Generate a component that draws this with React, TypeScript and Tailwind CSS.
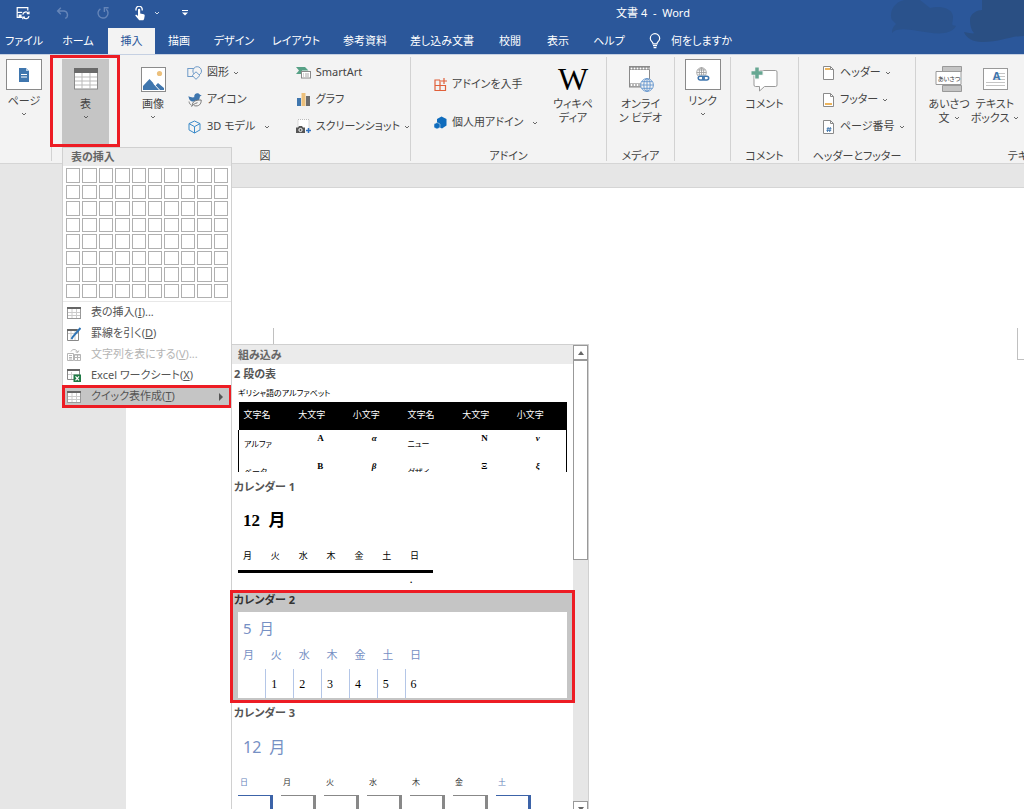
import type { ReactNode } from "react";
import { clsx } from "clsx";

interface Tab {
  label: string;
  width: string;
  active?: boolean;
}

const tabs: Tab[] = [
  { label: "ファイル", width: "w-[48px]" },
  { label: "ホーム", width: "w-[60px]" },
  { label: "挿入", width: "w-[47px]", active: true },
  { label: "描画", width: "w-[48px]" },
  { label: "デザイン", width: "w-[62px]" },
  { label: "レイアウト", width: "w-[62px]" },
  { label: "参考資料", width: "w-[76px]" },
  { label: "差し込み文書", width: "w-[78px]" },
  { label: "校閲", width: "w-[58px]" },
  { label: "表示", width: "w-[38px]" },
  { label: "ヘルプ", width: "w-[64px]" },
];

const days = ["月", "火", "水", "木", "金", "土", "日"];
const sundayFirst = ["日", "月", "火", "水", "木", "金", "土"];

const greekRows = [
  ["アルファ", "Α", "α", "ニュー", "Ν", "ν"],
  ["ベータ", "Β", "β", "グザイ", "Ξ", "ξ"],
];

function Chevron({ className }: { className?: string }) {
  return (
    <svg viewBox="0 0 6 4" className={clsx("h-1 w-1.5 shrink-0", className)} fill="none" stroke="currentColor" strokeWidth=".8">
      <path d="M1 1l2 2 2-2" />
    </svg>
  );
}

/* ---------- icons ---------- */

function SaveSyncIcon() {
  return (
    <svg viewBox="0 0 14 14" className="size-3.5" fill="none" stroke="white" strokeWidth="1.2">
      <path d="M6 11.4H1.2V1.6h10.6v3" />
      <path d="M1.2 6.4h5" />
      <path d="M2.6 8.5h3v3h-3z" fill="white" stroke="none" />
      <path d="M6.8 8.6a3 3 0 0 1 5.4-1.4M13 5.4v2.2h-2.2M13 10.2a3 3 0 0 1-5.4 1.2M6.8 13.2V11H9" />
    </svg>
  );
}

function UndoIcon() {
  return (
    <svg viewBox="0 0 14 14" className="size-3.5" fill="none" stroke="#6585b8" strokeWidth="1.4">
      <path d="M4.8 1.8L1.6 5l3.2 3.2M1.8 5h6.4a3.9 3.9 0 0 1 1 7.4" />
    </svg>
  );
}

function RedoIcon() {
  return (
    <svg viewBox="0 0 14 14" className="size-3.5" fill="none" stroke="#6585b8" strokeWidth="1.4">
      <path d="M4.4 2.8A5 5 0 1 0 10.2 3.200M8.400 6V1.800h4.200" />
    </svg>
  );
}

function TouchIcon() {
  return (
    <svg viewBox="0 0 12 15" className="h-[15px] w-3" fill="white">
      <path d="M2.2 4.4a3.1 3.1 0 1 1 5.8 0" fill="none" stroke="white" strokeWidth="1.3" />
      <path d="M4 3.8a1.1 1.1 0 0 1 2.2 0v3.700l3.600.8c.7.2 1 .7.9 1.400l-.6 3.400-.8 1.200H5.200L1.400 9.800c-.3-.7.7-1.400 1.500-.8L4 10z" />
    </svg>
  );
}

function BulbIcon() {
  return (
    <svg viewBox="0 0 12 16" className="h-4 w-3" fill="none" stroke="white" strokeWidth="1.2">
      <path d="M4 10.8C4 9 1.3 8.2 1.3 5.4a4.7 4.7 0 0 1 9.4 0C10.7 8.2 8 9 8 10.8zM4 12.6h4M4.6 14.6h2.8" />
    </svg>
  );
}

function PageIcon() {
  return (
    <svg viewBox="0 0 12 14" className="h-3.5 w-3">
      <path d="M1 0h7l3 3v11H1z" fill="#3f76ae" />
      <path d="M8 0v3h3z" fill="#b7cfe6" />
      <path d="M3 6.5h6M3 9h6" stroke="white" />
    </svg>
  );
}

function TableIcon() {
  return (
    <svg viewBox="0 0 24 22" className="h-[22px] w-6">
      <rect x=".5" y=".5" width="23" height="20.5" fill="white" stroke="#8a8a8a" />
      <rect width="24" height="5" fill="#6a6a6a" />
      <path d="M8 5v16M16 5v16M1 9h22M1 13h22M1 17h22" stroke="#bbb" />
    </svg>
  );
}

function PictureIcon() {
  return (
    <svg viewBox="0 0 25 25" className="size-[25px]">
      <rect x=".5" y=".5" width="24" height="24" fill="white" stroke="#8b8b8b" />
      <circle cx="18.5" cy="6.5" r="2.6" fill="#ecc07c" />
      <path d="M2 23v-4l6.5-7 6 6.5 2.5-2.5 6 5v2z" fill="#3f76ae" />
      <path d="M12.500 16.500l6 6.500" stroke="white" />
    </svg>
  );
}

function ShapesIcon() {
  return (
    <svg viewBox="0 0 16 14" className="h-3.5 w-4" fill="#f3f3f3" stroke="#6f9bc8">
      <rect x=".8" y="2.5" width="9" height="8" />
      <circle cx="10.2" cy="5" r="4.3" />
      <path d="M9 5.8l3.9 3.7L9 13.3 5.2 9.5z" />
    </svg>
  );
}

function BirdIcon() {
  return (
    <svg viewBox="0 0 14 14" className="size-3.5">
      <path d="M.5 3c1.800 1.300 3.800 1.700 5.700 1.300C6 1.800 7.500.3 9.300.3c1.300 0 2.200.6 2.600 1.500l1.800.8-1.800.9c-.1 2.300-1 4-2.900 5H4C1.800 7.800.5 5.500.5 3z" fill="#3f76ae" />
      <path d="M1 8.500c.3 2 1.200 3.200 2.800 4" fill="none" stroke="#888" />
      <path d="M4.500 12.500c-.5-3.500 2.500-5.700 8.700-5.500.2 4-2.200 6.800-7 5.700" fill="#f3f3f3" stroke="#777" />
      <path d="M3.500 13.700c1.500-2 3.500-3.400 6-4" fill="none" stroke="#777" />
    </svg>
  );
}

function CubeIcon() {
  return (
    <svg viewBox="0 0 14 14" className="size-3.5" fill="none" stroke="#3b8bc9">
      <path d="M6.500 1l5.500 2.600v6.300L6.500 13 1 9.900V3.600zM1 3.600l5.500 3 5.500-3M6.500 6.600V13" />
    </svg>
  );
}

function SmartArtIcon() {
  return (
    <svg viewBox="0 0 15 13" className="h-[13px] w-[15px]">
      <path d="M0 1h9l3.500 3.500H6V8H0l3-3.500z" fill="#57a186" />
      <rect x="5.500" y="5.500" width="9" height="6.500" fill="white" stroke="#8a8a8a" />
      <path d="M7 8h1M9 8h4M7 10h1M9 10h4" stroke="#aaa" />
    </svg>
  );
}

function ChartIcon() {
  return (
    <svg viewBox="0 0 13 13" className="size-[13px]">
      <path d="M0 5h4v8H0z" fill="#3f76ae" />
      <path d="M4.500 0h4v13h-4z" fill="#ecc07c" />
      <path d="M9 3h4v10H9z" fill="#6d6d6d" />
    </svg>
  );
}

function ScreenshotIcon() {
  return (
    <svg viewBox="0 0 15 15" className="size-[15px]">
      <rect x="2" y=".5" width="11" height="11" fill="white" stroke="#bbb" strokeDasharray="1 1" />
      <path d="M0 8.500h2l1-1.500h3l1 1.500h2V14H0z" fill="#555" />
      <circle cx="4.500" cy="11" r="1.600" fill="none" stroke="white" />
      <path d="M12.500 9v5M10 11.500h5" stroke="#2e6fbf" strokeWidth="1.500" />
    </svg>
  );
}

function StoreIcon() {
  return (
    <svg viewBox="0 0 15 15" className="size-[15px]" fill="none" stroke="#e0603a" strokeWidth="1.200">
      <path d="M7 3H2v10.500h10.500V8.500H2M7 3v10.500M11 1v6M8 4h6" />
    </svg>
  );
}

function MyAddinIcon() {
  return (
    <svg viewBox="0 0 13 13" className="size-[13px]" fill="#0f6cbd">
      <path d="M7.500.5L12.500 3v6.500L8 12.500 3 10V3z" />
      <path d="M0 8l3-1.500L6 8v3.500L3 13l-3-1.500z" stroke="#f3f3f3" strokeWidth=".5" />
    </svg>
  );
}

function VideoIcon() {
  return (
    <svg viewBox="0 0 26 26" className="size-[26px]" fill="none">
      <rect x="1.500" y=".5" width="20" height="20.500" fill="white" stroke="#8a8a8a" />
      <path d="M2 2.500h19M2 19h19" stroke="#777" strokeWidth="3" />
      <path d="M2.500 2.500h19M2.500 19h19" stroke="white" strokeWidth="2" strokeDasharray="2 1" />
      <circle cx="19" cy="19" r="6.400" fill="#f3f3f3" stroke="#6c9bd0" />
      <path d="M19 12.600v12.800M12.600 19h12.800M13.700 15.700h10.600M13.700 22.300h10.600" stroke="#6c9bd0" />
      <ellipse cx="19" cy="19" rx="3.200" ry="6.400" stroke="#6c9bd0" />
    </svg>
  );
}

function LinkIcon() {
  return (
    <svg viewBox="0 0 15 15" className="size-[15px]" fill="none">
      <g stroke="#999" strokeWidth=".8">
        <circle cx="6.500" cy="5.500" r="4.800" />
        <ellipse cx="6.500" cy="5.500" rx="2.200" ry="4.800" />
        <path d="M1.700 5.500h9.600M6.500.7v9.600M2.500 3h8M2.500 8h8" />
      </g>
      <path d="M3 8.500h11v5H3z" fill="white" />
      <g stroke="#3f76ae" strokeWidth="1.500">
        <rect x="3.200" y="9.200" width="6" height="3.800" rx="1.900" />
        <rect x="7.700" y="9.200" width="6" height="3.800" rx="1.900" />
      </g>
    </svg>
  );
}

function CommentIcon() {
  return (
    <svg viewBox="0 0 27 25" className="h-[25px] w-[27px]">
      <path d="M4.500 3.500h20a1.500 1.500 0 0 1 1.500 1.500v13a1.500 1.500 0 0 1-1.500 1.500h-11L8.500 24v-4.500h-4A1.500 1.500 0 0 1 3 18V5a1.500 1.500 0 0 1 1.500-1.500z" fill="white" stroke="#999" />
      <path d="M6 0v12.500M0 6h12.500" stroke="#f3f3f3" strokeWidth="5" />
      <path d="M6 .5v11M.5 6h11" stroke="#67a792" strokeWidth="3.500" />
    </svg>
  );
}

function SheetIcon({ kind }: { kind: "header" | "footer" | "number" }) {
  return (
    <svg viewBox="0 0 11 14" className="h-3.5 w-[11px]">
      <path d="M.5.500h7l3 3v10H.5z" fill="white" stroke="#8a8a8a" />
      <path d="M7.500.500v3h3" fill="none" stroke="#8a8a8a" />
      {kind === "header" && <path d="M2 3h5" stroke="#ecb45c" strokeWidth="2" />}
      {kind === "footer" && <path d="M2 11h7" stroke="#ecb45c" strokeWidth="2" />}
      {kind === "number" && <path d="M5.200 7l-.8 5M7.400 7l-.8 5M3.700 8.700h4.800M3.400 10.400h4.800" stroke="#3f76ae" strokeWidth=".9" />}
    </svg>
  );
}

function GreetingIcon() {
  return (
    <span className="relative flex h-[26px] w-[28px] items-center justify-center">
      <svg viewBox="0 0 28 26" className="absolute inset-0">
        <path d="M7.500.5h19v5h-19zM7.500 19.500h19v6h-19z" fill="#c4c4c4" stroke="#999" />
        <path d="M1 5.500h25v13H1z" fill="white" stroke="#999" />
      </svg>
      <span className="relative text-[6px] leading-none text-[#333]">あいさつ</span>
    </span>
  );
}

function TextBoxIcon() {
  return (
    <span className="relative block h-[22px] w-[25px]">
      <svg viewBox="0 0 25 22" className="absolute inset-0">
        <rect x=".5" y=".5" width="24" height="21" fill="white" stroke="#999" />
        <path d="M12 5.500h10M12 8.500h10M12 11.500h10M3 14.500h19M3 17.500h19" stroke="#c5c5c5" />
      </svg>
      <span className="relative block pt-0.5 pl-[3px] text-[11px] leading-3 font-bold text-[#3f76ae]">A</span>
    </span>
  );
}

function MenuTableIcon() {
  return (
    <svg viewBox="0 0 14 12" className="h-3 w-3.5">
      <rect x=".5" y=".5" width="13" height="11" fill="white" stroke="#999" />
      <path d="M0 1h14" stroke="#666" strokeWidth="2" />
      <path d="M5 2v9M9.500 2v9M1 5.500h12M1 8.500h12" stroke="#ccc" />
    </svg>
  );
}

function DrawTableIcon() {
  return (
    <svg viewBox="0 0 14 14" className="size-3.5">
      <path d="M.5 2.500h11v11H.5z" fill="white" stroke="#888" />
      <path d="M0 3h10" stroke="#666" strokeWidth="2" />
      <path d="M1 6.500h10M4 4v9M8 4v9" stroke="#ccc" />
      <path d="M13.500 1L6 9.500 4.500 12" stroke="#2f74b5" strokeWidth="2" fill="none" />
    </svg>
  );
}

function ConvertIcon() {
  return (
    <svg viewBox="0 0 14 13" className="h-[13px] w-3.5" fill="none" stroke="#b5b5b5">
      <path d="M.5 5.500h6v7h-6zM2 7.500h3M2 9.500h3M2 11h3" />
      <path d="M7.500 6.500h6v6h-6zM7.500 9.500h6M10.500 7v5M7.500 7h6" />
      <path d="M4 3.500c1-2.500 5-3 6.500.5M11.800 2.500l-1 2-2.200-.7" />
    </svg>
  );
}

function ExcelIcon() {
  return (
    <svg viewBox="0 0 14 13" className="h-[13px] w-3.5">
      <path d="M.5.500h12v10H.5z" fill="white" stroke="#888" />
      <path d="M0 1h13" stroke="#666" strokeWidth="2" />
      <path d="M1 5.500h11M4.500 3v7" stroke="#ccc" />
      <path d="M6.500 5.500H14V13H6.500z" fill="#1f7a45" />
      <path d="M8.500 7.300l3.500 4M12 7.300l-3.500 4" stroke="white" strokeWidth="1.200" />
    </svg>
  );
}

/* ---------- ribbon pieces ---------- */

function Group({ label, className, children }: { label?: string; className?: string; children: ReactNode }) {
  return (
    <section className={clsx("relative flex shrink-0 flex-col justify-between pt-1", className)}>
      <div className="flex">{children}</div>
      {label && <div className="h-[14px] text-center leading-[14px] whitespace-nowrap">{label}</div>}
    </section>
  );
}

function Divider() {
  return <div className="my-0.5 w-px shrink-0 bg-[#d2d2d2]" />;
}

interface BigButtonProps {
  icon: ReactNode;
  lines: string[];
  className?: string;
  boxed?: boolean;
  chevron?: "below" | "inline";
}

function BigButton({ icon, lines, className, boxed, chevron }: BigButtonProps) {
  return (
    <button className={clsx("flex shrink-0 flex-col items-center leading-[14px] whitespace-nowrap", className)}>
      <span
        className={clsx(
          "flex items-center justify-center",
          boxed ? "mb-1 h-[31px] w-9 border border-[#8a8a8a] bg-white" : "mt-1 mb-0.5 h-8"
        )}
      >
        {icon}
      </span>
      {lines.map((line, i) => (
        <span key={line} className="flex items-center gap-1">
          {line}
          {chevron === "inline" && i === lines.length - 1 && <Chevron />}
        </span>
      ))}
      {chevron === "below" && <Chevron className="mt-1" />}
    </button>
  );
}

function SmallButton({ icon, label, chevron, spread }: { icon: ReactNode; label: string; chevron?: boolean; spread?: boolean }) {
  return (
    <button className="flex h-[27px] items-center gap-1 whitespace-nowrap">
      <span className="flex w-4 shrink-0 justify-center">{icon}</span>
      <span>{label}</span>
      {chevron && <Chevron className={spread ? "ml-auto" : ""} />}
    </button>
  );
}

/* ---------- table menu ---------- */

function MenuItem({ icon, label, accessKey, suffix, disabled, active }: { icon: ReactNode; label: string; accessKey: string; suffix?: string; disabled?: boolean; active?: boolean }) {
  return (
    <button
      disabled={disabled}
      className={clsx(
        "flex h-[21px] w-full items-center gap-2.5 pr-2 pl-1 text-left whitespace-nowrap",
        disabled ? "text-[#b5b5b5]" : "text-[#555]",
        active && "bg-[#c5c5c5]"
      )}
    >
      {icon}
      <span>
        {label}(<u>{accessKey}</u>){suffix}
      </span>
      {active && (
        <svg viewBox="0 0 4 8" className="ml-auto h-2 w-1" fill="#555">
          <path d="M0 0l4 4-4 4z" />
        </svg>
      )}
    </button>
  );
}

function TableMenu() {
  return (
    <div className="absolute top-[92px] left-2.5 z-20 w-[170px] border border-[#d0d0d0] bg-white">
      <h2 className="h-[18px] bg-[#ebebeb] pl-2 leading-[18px] font-bold text-[#666]">表の挿入</h2>
      <div className="mx-[3px] mt-0.5 grid h-[130px] grid-cols-10 grid-rows-8 gap-0.5">
        {Array.from({ length: 80 }, (_, i) => (
          <button key={i} aria-label={`${Math.floor(i / 10) + 1} x ${(i % 10) + 1}`} className="border border-[#b0b0b0]" />
        ))}
      </div>
      <div className="mt-[3px] border-t border-[#e8e8e8]">
        <MenuItem icon={<MenuTableIcon />} label="表の挿入" accessKey="I" suffix="..." />
        <MenuItem icon={<DrawTableIcon />} label="罫線を引く" accessKey="D" />
        <MenuItem icon={<ConvertIcon />} label="文字列を表にする" accessKey="V" suffix="..." disabled />
        <MenuItem icon={<ExcelIcon />} label="Excel ワークシート" accessKey="X" />
        <div className="relative">
          <MenuItem icon={<MenuTableIcon />} label="クイック表作成" accessKey="T" active />
          <div className="pointer-events-none absolute -inset-x-px -inset-y-px border-[3px] border-[#ed1c24]" />
        </div>
      </div>
      <Gallery />
    </div>
  );
}

function GalleryItem({ title, active, children }: { title: string; active?: boolean; children: ReactNode }) {
  return (
    <section className={clsx("relative h-[113px] px-1.5", active && "bg-[#c5c5c5]")}>
      <h3 className={clsx("-ml-1 h-[22px] pt-px leading-[18px] font-bold", active ? "text-[#333]" : "text-[#555]")}>{title}</h3>
      <div className="h-[86px] overflow-hidden bg-white">{children}</div>
      {active && <div className="pointer-events-none absolute -inset-x-0.5 inset-y-0 border-[3px] border-[#ed1c24]" />}
    </section>
  );
}

function GreekTable() {
  return (
    <table className="w-full table-fixed border-collapse font-['Liberation_Serif','Noto_Sans_CJK_JP',serif] text-[9px] text-black">
      <caption className="h-4 text-left text-[8px] leading-4">ギリシャ語のアルファベット</caption>
      <thead>
        <tr className="h-7 bg-black text-left text-white">
          {["文字名", "大文字", "小文字", "文字名", "大文字", "小文字"].map((name, i) => (
            <th key={i} className="pl-[5px] font-normal">
              {name}
            </th>
          ))}
        </tr>
      </thead>
      <tbody className="border-x border-black">
        {greekRows.map((row) => (
          <tr key={row[0]} className="h-7">
            {row.map((cell, i) =>
              i % 3 === 0 ? (
                <td key={i} className="pt-0.5 pl-[5px] text-[8px]">
                  {cell}
                </td>
              ) : (
                <td key={i} className={clsx("pt-0.5 pl-6 align-top leading-3 font-bold", i % 3 === 2 && "italic")}>
                  {cell}
                </td>
              )
            )}
          </tr>
        ))}
      </tbody>
    </table>
  );
}

function Gallery() {
  return (
    <div className="absolute top-[196px] left-[168px] flex w-[358px] border border-[#d0d0d0] bg-white">
      <div className="flex-1">
        <h2 className="h-[19px] bg-[#ebebeb] pl-1.5 leading-[19px] font-bold text-[#666]">組み込み</h2>
        <GalleryItem title="2 段の表">
          <GreekTable />
        </GalleryItem>
        <GalleryItem title="カレンダー 1">
          <div className="pt-2 pl-[5px] font-['Liberation_Serif','Noto_Sans_CJK_JP',serif] text-[17px] leading-7 font-bold text-black">12&ensp;月</div>
          <table className="mt-3.5 w-[195px] table-fixed border-collapse text-left font-['Liberation_Serif','Noto_Sans_CJK_JP',serif] text-[9px] text-black">
            <thead>
              <tr className="h-[22px] border-b-[3px] border-black">
                {days.map((day) => (
                  <th key={day} className="pl-[5px] align-top font-normal leading-[14px]">
                    {day}
                  </th>
                ))}
              </tr>
            </thead>
            <tbody>
              <tr>
                <td colSpan={6} />
                <td className="pl-[5px] leading-[14px] font-bold">.</td>
              </tr>
            </tbody>
          </table>
        </GalleryItem>
        <GalleryItem title="カレンダー 2" active>
          <div className="pt-0.5 pl-[5px] text-[15px] leading-7 text-[#7690c4]">5&ensp;月</div>
          <table className="w-[195px] table-fixed border-collapse text-left">
            <thead>
              <tr className="h-[27px] text-[11px] text-[#7690c4]">
                {days.map((day) => (
                  <th key={day} className="pl-[5px] font-normal">
                    {day}
                  </th>
                ))}
              </tr>
            </thead>
            <tbody>
              <tr className="h-[29px] font-['Liberation_Serif','Noto_Sans_CJK_JP',serif] text-[12px] text-black">
                {["", "1", "2", "3", "4", "5", "6"].map((n) => (
                  <td key={n} className={clsx("pl-[5px]", n && "border-l border-[#b4c6e7]")}>
                    {n}
                  </td>
                ))}
              </tr>
            </tbody>
          </table>
        </GalleryItem>
        <GalleryItem title="カレンダー 3">
          <div className="pt-2 pl-[5px] text-[16px] leading-7 text-[#7690c4]">12&ensp;月</div>
          <div className="mt-3.5 flex gap-2">
            {sundayFirst.map((day, i) => {
              const weekend = i === 0 || i === 6;
              return (
                <div key={day} className="w-[35px]">
                  <div className={clsx("h-5 pl-0.5 text-[8px] leading-[14px]", weekend ? "text-[#6582bb]" : "text-[#333]")}>{day}</div>
                  <div className={clsx("h-4 border-t border-r-[3px]", weekend ? "border-[#3c63a8]" : "border-[#888]")} />
                </div>
              );
            })}
          </div>
        </GalleryItem>
      </div>
      <div className="flex w-[15px] flex-col bg-[#e6e6e6]">
        <button aria-label="上へ" className="flex h-[15px] items-center justify-center border border-[#999] bg-white">
          <svg viewBox="0 0 6 4" className="h-1 w-1.5" fill="#666">
            <path d="M0 4l3-4 3 4z" />
          </svg>
        </button>
        <div className="h-[200px] border border-[#999] bg-white" />
        <button aria-label="下へ" className="mt-auto flex h-[15px] items-center justify-center border border-[#999] bg-white">
          <svg viewBox="0 0 6 4" className="h-1 w-1.5" fill="#666">
            <path d="M0 0h6L3 4z" />
          </svg>
        </button>
      </div>
    </div>
  );
}

/* ---------- page ---------- */

function TitleBar() {
  return (
    <header className="relative shrink-0 border-b border-[#c5d0e2] bg-[#2b579a] text-white">
      <svg viewBox="0 0 140 44" className="absolute top-0 right-0 h-11 w-[140px]">
        <path d="M8 20C4 10 13 0 22 0h14l10 8c12-3 23 1 23 9 0 7-3 8 3 9-6 11-24 7-38 5-12-2-22-3-26 2 0-5 2-7 4-9z" fill="#2a528c" />
        <path d="M86 20c0-7 8-10 12-10V0h42v36c-14 0-22 6-42 6-9 0-16-4-18-10 5 1 10 2 10 1-3-3-4-8-4-13z" fill="#2a4f83" />
      </svg>
      <div className="flex h-7 items-center pb-0.5">
        <div className="flex w-[282px] items-center pl-4">
          <button aria-label="上書き保存" className="mr-[26px]"><SaveSyncIcon /></button>
          <button aria-label="元に戻す" className="mr-[26px]"><UndoIcon /></button>
          <button aria-label="繰り返し" className="mr-6"><RedoIcon /></button>
          <button aria-label="タッチ/マウス モードの切り替え" className="flex items-center gap-2">
            <TouchIcon />
            <Chevron />
          </button>
          <button aria-label="クイック アクセス ツール バーのユーザー設定" className="ml-[22px]">
            <svg viewBox="0 0 6 6" className="size-1.5" fill="white">
              <path d="M0 0h6v1H0zM0 2.500h6l-3 3z" />
            </svg>
          </button>
        </div>
        <h1 className="flex-1 text-center whitespace-pre">文書 4  -  Word</h1>
      </div>
      <nav className="flex h-[26px]">
        {tabs.map((tab) => (
          <button
            key={tab.label}
            className={clsx("shrink-0 whitespace-nowrap", tab.width, tab.active && "bg-[#f3f3f3] text-[#2b579a]")}
          >
            {tab.label}
          </button>
        ))}
        <button className="ml-2 flex items-center gap-2.5 whitespace-nowrap">
          <BulbIcon />
          何をしますか
        </button>
      </nav>
    </header>
  );
}

function Ribbon() {
  return (
    <div className="relative z-10 flex h-[109px] shrink-0 border-b border-[#d5d5d5] bg-[#f3f3f3]">
      <Group className="w-[51px]">
        <BigButton className="ml-1.5" icon={<PageIcon />} lines={["ページ"]} boxed chevron="below" />
      </Group>
      <Divider />
      <Group className="w-[68px]">
        <BigButton className="ml-2.5 h-[88px] w-[47px] bg-[#c5c5c5]" icon={<TableIcon />} lines={["表"]} chevron="below" />
        <TableMenu />
        <div className="pointer-events-none absolute top-0 -left-0.5 h-[92px] w-[70px] border-[3px] border-[#ed1c24]" />
      </Group>
      <Group label="図" className="w-[290px]">
        <BigButton className="ml-3.5 w-[38px]" icon={<PictureIcon />} lines={["画像"]} chevron="below" />
        <div className="ml-[15px] flex w-[86px] flex-col">
          <SmallButton icon={<ShapesIcon />} label="図形" chevron />
          <SmallButton icon={<BirdIcon />} label="アイコン" />
          <SmallButton icon={<CubeIcon />} label="3D モデル" chevron spread />
        </div>
        <div className="ml-[26px] flex flex-col">
          <SmallButton icon={<SmartArtIcon />} label="SmartArt" />
          <SmallButton icon={<ChartIcon />} label="グラフ" />
          <SmallButton icon={<ScreenshotIcon />} label="スクリーンショット" chevron />
        </div>
      </Group>
      <Divider />
      <Group label="アドイン" className="w-[195px]">
        <div className="ml-[21px] flex w-[106px] flex-col gap-[11px] pt-3">
          <SmallButton icon={<StoreIcon />} label="アドインを入手" />
          <SmallButton icon={<MyAddinIcon />} label="個人用アドイン" chevron spread />
        </div>
        <BigButton
          className="ml-[7px] w-[56px]"
          icon={<span className="font-['Liberation_Serif',serif] text-[32px] leading-8 text-black">W</span>}
          lines={["ウィキペ", "ディア"]}
        />
      </Group>
      <Divider />
      <Group label="メディア" className="w-[67px]">
        <BigButton className="w-full" icon={<VideoIcon />} lines={["オンライ", "ン ビデオ"]} />
      </Group>
      <Divider />
      <Group className="w-[55px]">
        <BigButton className="w-full" icon={<LinkIcon />} lines={["リンク"]} boxed chevron="below" />
      </Group>
      <Divider />
      <Group label="コメント" className="w-[67px]">
        <BigButton className="w-full" icon={<CommentIcon />} lines={["コメント"]} />
      </Group>
      <Divider />
      <Group label="ヘッダーとフッター" className="w-[116px]">
        <div className="ml-[21px] flex flex-col">
          <SmallButton icon={<SheetIcon kind="header" />} label="ヘッダー" chevron />
          <SmallButton icon={<SheetIcon kind="footer" />} label="フッター" chevron />
          <SmallButton icon={<SheetIcon kind="number" />} label="ページ番号" chevron />
        </div>
      </Group>
      <Divider />
      <Group label="テキスト" className="w-[222px]">
        <BigButton className="ml-2.5 w-[46px]" icon={<GreetingIcon />} lines={["あいさつ", "文"]} chevron="inline" />
        <BigButton className="w-[46px]" icon={<TextBoxIcon />} lines={["テキスト", "ボックス"]} chevron="inline" />
      </Group>
    </div>
  );
}

export default function App() {
  return (
    <div className="flex h-screen flex-col overflow-hidden bg-[#e6e6e6] font-['Noto_Sans','Noto_Sans_CJK_JP',sans-serif] text-[11px] text-[#444] [font-feature-settings:'palt']">
      <TitleBar />
      <Ribbon />
      <main className="mt-[23px] ml-[126px] flex flex-1 items-start justify-between border-t border-[#d5d5d5] bg-white pt-[140px]">
        <div className="ml-[147px] h-8 w-px bg-[#c0c0c0]" />
        <div className="h-8 w-[7px] border-b border-l border-[#c0c0c0]" />
      </main>
    </div>
  );
}
